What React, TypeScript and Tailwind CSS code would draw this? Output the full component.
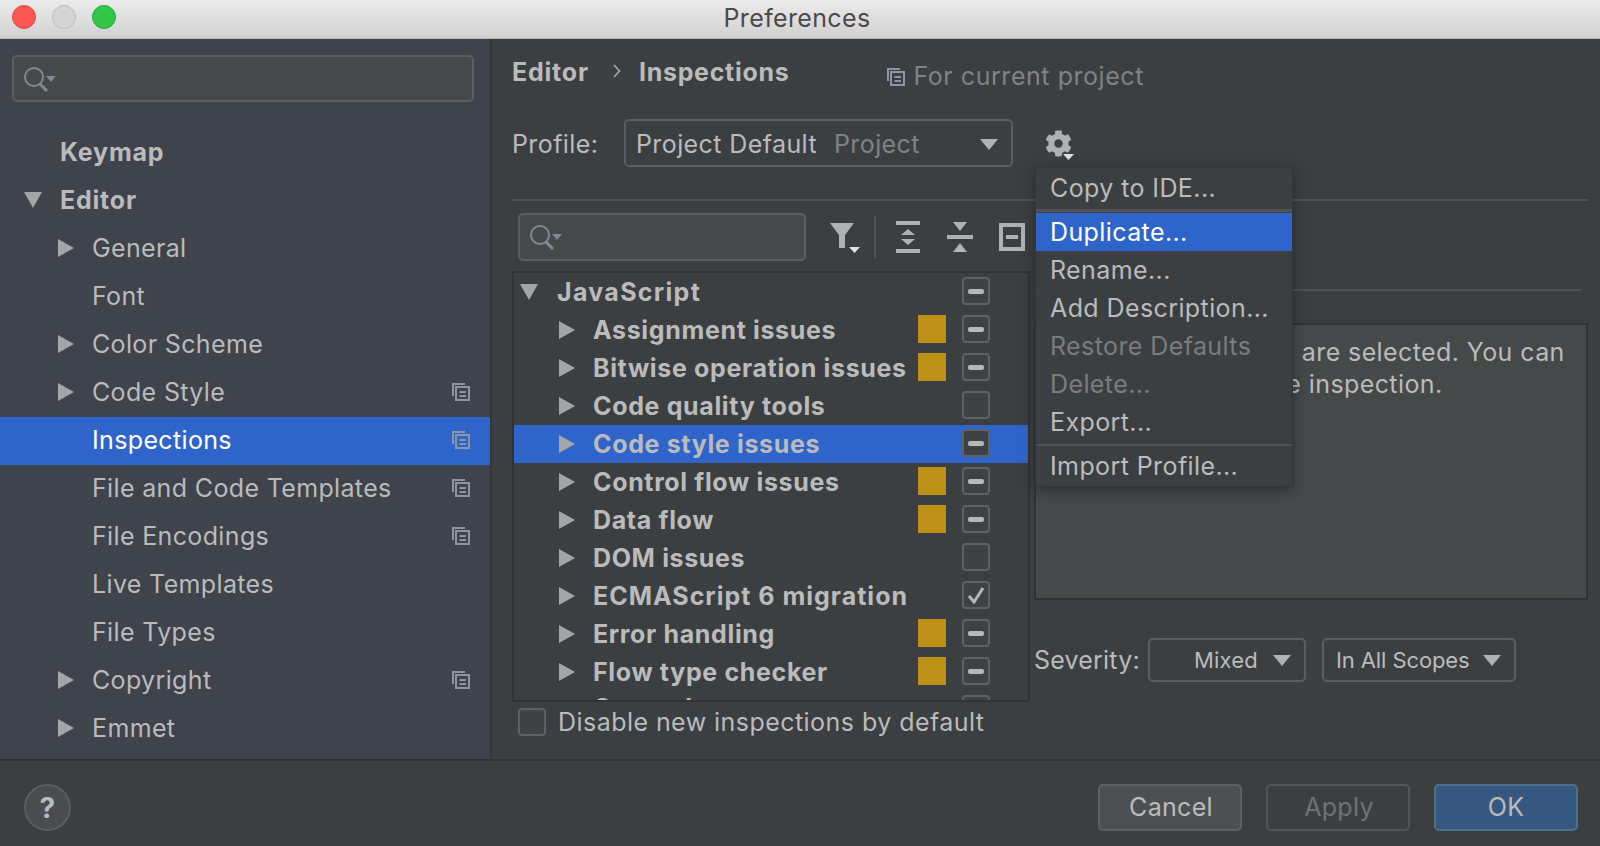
import { FaCog } from 'react-icons/fa';

const SIDEBAR_ITEMS = [
  { label: 'General', arrow: true },
  { label: 'Font' },
  { label: 'Color Scheme', arrow: true },
  { label: 'Code Style', arrow: true, copy: true },
  { label: 'Inspections', copy: true, selected: true },
  { label: 'File and Code Templates', copy: true },
  { label: 'File Encodings', copy: true },
  { label: 'Live Templates' },
  { label: 'File Types' },
  { label: 'Copyright', arrow: true, copy: true },
  { label: 'Emmet', arrow: true },
];

const TREE_ROWS = [
  { label: 'Assignment issues', warn: true, check: 'mixed' },
  { label: 'Bitwise operation issues', warn: true, check: 'mixed' },
  { label: 'Code quality tools', check: 'none' },
  { label: 'Code style issues', check: 'mixed', selected: true },
  { label: 'Control flow issues', warn: true, check: 'mixed' },
  { label: 'Data flow', warn: true, check: 'mixed' },
  { label: 'DOM issues', check: 'none' },
  { label: 'ECMAScript 6 migration', check: 'checked', wide: true },
  { label: 'Error handling', warn: true, check: 'mixed' },
  { label: 'Flow type checker', warn: true, check: 'mixed' },
  { label: 'General', check: 'mixed', cut: true },
];

function ArrowRight() {
  return (
    <svg width="16" height="18" viewBox="0 0 16 18" className="shrink-0">
      <path d="M0 0L16 9L0 18Z" fill="#a3a5a7" />
    </svg>
  );
}

function ArrowDown() {
  return (
    <svg width="18" height="16" viewBox="0 0 18 16" className="shrink-0">
      <path d="M0 0H18L9 16Z" fill="#a3a5a7" />
    </svg>
  );
}

function CaretDown({ w = 18, h = 11, color = '#afb1b3' }: { w?: number; h?: number; color?: string }) {
  return (
    <svg width={w} height={h} viewBox="0 0 18 11" preserveAspectRatio="none" className="shrink-0">
      <path d="M0 0H18L9 11Z" fill={color} />
    </svg>
  );
}

function CopyIcon() {
  return (
    <svg width="18" height="18" viewBox="0 0 18 18" fill="none" stroke="#8a96a3" strokeWidth="2" className="shrink-0">
      <path d="M13 1H1V13" />
      <path d="M4 4H17V17H4Z" />
      <path d="M7.5 9H14M7.5 13H14" />
    </svg>
  );
}

function SearchIcon() {
  return (
    <svg width="34" height="26" viewBox="0 0 34 26" fill="none" className="shrink-0">
      <circle cx="11" cy="11" r="9" stroke="#7d8a94" strokeWidth="2" />
      <path d="M17 18L24 25" stroke="#7d8a94" strokeWidth="3" />
      <path d="M23 10H33L28 16Z" fill="#7d8a94" />
    </svg>
  );
}

function SearchField({ className }: { className: string }) {
  return (
    <div className={`flex items-center pl-[9px] bg-[#45494a] border-2 border-[#5b5e60] rounded-[5px] ${className}`}>
      <SearchIcon />
    </div>
  );
}

function Checkbox({ state }: { state: string }) {
  return (
    <div className="w-[28px] h-[28px] shrink-0 flex items-center justify-center border-2 border-[#5e6164] rounded-[4px] bg-[#3f4244]">
      {state === 'mixed' && <div className="w-[16px] h-[5px] rounded-[2px] bg-[#b5b7b9]" />}
      {state === 'checked' && (
        <svg width="18" height="18" viewBox="0 0 18 18" fill="none">
          <path d="M2 10L7 16L16 2" stroke="#b5b7b9" strokeWidth="3" />
        </svg>
      )}
    </div>
  );
}

function Select({ className, children }: { className: string; children: React.ReactNode }) {
  return (
    <div className={`flex items-center border-2 border-[#5b5e60] rounded-[5px] ${className}`}>{children}</div>
  );
}

function Sidebar() {
  return (
    <div className="w-[490px] shrink-0 bg-[#3e434c] border-r-2 border-[#333537] box-content">
      <div className="pt-[16px] pl-[12px]">
        <SearchField className="w-[462px] h-[47px]" />
      </div>
      <div className="mt-[27px]">
        <div className="h-[48px] pb-[2px] flex items-center pl-[60px] font-bold tracking-[0.8px] text-[#bbbbbb]">Keymap</div>
        <div className="h-[48px] pb-[2px] flex items-center pl-[24px] font-bold tracking-[0.8px] text-[#bbbbbb]">
          <ArrowDown />
          <span className="ml-[18px]">Editor</span>
        </div>
        {SIDEBAR_ITEMS.map((item) => (
          <div
            key={item.label}
            className={`h-[48px] pb-[2px] flex items-center pr-[20px] ${item.selected ? 'bg-[#2f65ca] text-white' : 'text-[#bbbbbb]'}`}
          >
            <div className="w-[92px] shrink-0 pl-[58px]">{item.arrow && <ArrowRight />}</div>
            <span className="flex-1">{item.label}</span>
            {item.copy && <CopyIcon />}
          </div>
        ))}
      </div>
    </div>
  );
}

function ToolbarIcons() {
  return (
    <div className="flex items-center">
      <svg width="32" height="34" viewBox="0 0 32 34" className="ml-[22px] shrink-0">
        <path d="M2 3H26L17 15V28H11V15Z" fill="#afb1b3" />
        <path d="M21 27H32L26.5 33Z" fill="#dfe1e5" />
      </svg>
      <div className="w-[2px] h-[42px] ml-[14px] bg-[#505355]" />
      <svg width="26" height="32" viewBox="0 0 26 32" className="ml-[19px] shrink-0" fill="#afb1b3">
        <path d="M1 0H25V4H1ZM1 28H25V32H1ZM13 8L20 14H6ZM13 24L6 18H20Z" />
      </svg>
      <svg width="26" height="32" viewBox="0 0 26 32" className="ml-[26px] shrink-0" fill="#afb1b3">
        <path d="M0 14H26V18H0ZM6 1H20L13 10ZM13 22L20 31H6Z" />
      </svg>
      <svg width="26" height="28" viewBox="0 0 26 28" className="ml-[26px] shrink-0">
        <path d="M2 2H24V26H2Z" fill="none" stroke="#afb1b3" strokeWidth="4" />
        <path d="M7 12H19V16H7Z" fill="#afb1b3" />
      </svg>
    </div>
  );
}

function Tree() {
  return (
    <div className="mt-[10px] h-[431px] overflow-hidden border-2 border-[#323232] bg-[#3c3f41] font-bold tracking-[0.65px]">
      <div className="h-[38px] flex items-center pl-[6px]">
        <ArrowDown />
        <span className="ml-[19px] text-[#bbbbbb] tracking-[1.3px]">JavaScript</span>
        <div className="ml-auto mr-[38px] -mt-[2px]">
          <Checkbox state="mixed" />
        </div>
      </div>
      {TREE_ROWS.map((row) => (
        <div
          key={row.label}
          className={`h-[38px] flex items-center pl-[45px] ${row.selected ? 'bg-[#2f65ca]' : ''} text-[#bbbbbb]`}
        >
          <ArrowRight />
          <span
            className={`ml-[18px] flex-1 whitespace-nowrap ${row.cut ? '-mt-[4px]' : ''} ${row.wide ? 'tracking-[1px]' : ''}`}
          >
            {row.label}
          </span>
          {row.warn && <div className="w-[28px] h-[28px] -mt-[2px] bg-[#bd9117] shrink-0" />}
          <div className="ml-[16px] mr-[38px] -mt-[2px]">
            <Checkbox state={row.check} />
          </div>
        </div>
      ))}
    </div>
  );
}

function SettingsMenu() {
  return (
    <div className="absolute left-[543px] top-[128px] w-[258px] h-[320px] bg-[#3c3f41] border border-[#333537] shadow-[0_4px_14px_rgba(0,0,0,0.35)] text-[#bbbbbb] tracking-[0.4px]">
      <div className="h-[41px] flex items-center pl-[14px]">Copy to IDE...</div>
      <div className="h-[3px] bg-[#505355]" />
      <div className="h-[38px] mt-[1px] flex items-center pl-[14px] bg-[#2f65ca] text-white">Duplicate...</div>
      <div className="h-[38px] flex items-center pl-[14px]">Rename...</div>
      <div className="h-[38px] flex items-center pl-[14px]">Add Description...</div>
      <div className="h-[38px] flex items-center pl-[14px] text-[#7a7c7e]">Restore Defaults</div>
      <div className="h-[38px] flex items-center pl-[14px] text-[#7a7c7e]">Delete...</div>
      <div className="h-[38px] flex items-center pl-[14px]">Export...</div>
      <div className="h-[2px] mt-[3px] bg-[#505355]" />
      <div className="h-[40px] flex items-center pl-[14px]">Import Profile...</div>
    </div>
  );
}

function MainPanel() {
  return (
    <div className="relative flex-1 bg-[#3c3f41] pl-[20px] pr-[12px]">
      <div className="h-[66px] pt-[21px] flex items-start">
        <span className="font-bold tracking-[0.8px] text-[#bbbbbb]">Editor</span>
        <svg width="10" height="16" viewBox="0 0 10 16" fill="none" className="ml-[23px] mt-[3px] shrink-0">
          <path d="M2 2L7.5 8L2 14" stroke="#a9abad" strokeWidth="1.6" />
        </svg>
        <span className="ml-[17px] font-bold tracking-[0.7px] text-[#bbbbbb]">Inspections</span>
        <div className="ml-[98px] mt-[4px] flex items-center text-[#7f8386] tracking-[0.55px]">
          <CopyIcon />
          <span className="ml-[8px]">For current project</span>
        </div>
      </div>

      <div className="flex items-center h-[48px] mt-[14px] tracking-[0.4px]">
        <span className="w-[112px] pt-[2px] text-[#bbbbbb]">Profile:</span>
        <Select className="w-[389px] h-[48px] pl-[10px] pt-[2px]">
          <span className="text-[#bbbbbb]">Project Default</span>
          <span className="ml-[17px] text-[#7f8386]">Project</span>
          <div className="ml-auto mr-[13px]">
            <CaretDown />
          </div>
        </Select>
        <div className="relative ml-[32px] w-[30px] h-[30px] mt-[3px]">
          <FaCog size={27} color="#afb1b3" />
          <div className="absolute left-[18px] top-[24px]">
            <CaretDown w={11} h={6} color="#dfe1e5" />
          </div>
        </div>
      </div>

      <div className="h-[2px] mt-[32px] bg-[#505355]" />

      <div className="flex">
        <div className="w-[518px] shrink-0">
          <div className="pl-[6px] pt-[12px] flex items-center">
            <SearchField className="w-[288px] h-[48px]" />
            <ToolbarIcons />
          </div>
          <Tree />
          <div className="mt-[6px] ml-[6px] flex items-center text-[#bbbbbb] tracking-[0.45px]">
            <Checkbox state="none" />
            <span className="ml-[12px]">Disable new inspections by default</span>
          </div>
        </div>

        <div className="flex-1 ml-[4px]">
          <div className="h-[2px] mt-[88px] mr-[7px] bg-[#505355]" />
          <div className="mt-[32px] h-[277px] border-2 border-[#323232] bg-[#45494a] pl-[14px] pt-[11px] leading-[32px] text-[#bbbbbb] whitespace-nowrap tracking-[0.4px]">
            <p>Multiple inspections are selected. You can</p>
            <p>edit them as a single inspection.</p>
          </div>
          <div className="mt-[38px] flex items-center text-[#bbbbbb] tracking-[0.2px]">
            <span className="w-[114px]">Severity:</span>
            <Select className="w-[158px] h-[44px] justify-end pr-[13px]">
              <span className="text-[22px]">Mixed</span>
              <div className="ml-[15px]">
                <CaretDown />
              </div>
            </Select>
            <Select className="w-[194px] h-[44px] ml-[16px] pl-[12px]">
              <span className="text-[22px] tracking-[-0.1px]">In All Scopes</span>
              <div className="ml-auto mr-[13px]">
                <CaretDown />
              </div>
            </Select>
          </div>
        </div>
      </div>

      <SettingsMenu />
    </div>
  );
}

function Footer() {
  return (
    <div className="h-[87px] flex items-start bg-[#3c3f41] border-t-2 border-[#323232] pl-[24px] pr-[22px] pt-[23px]">
      <div className="w-[47px] h-[47px] rounded-full bg-[#4a4d4f] border-2 border-[#5b5e60] flex items-center justify-center font-bold text-[28px] text-[#bbbbbb]">
        ?
      </div>
      <div className="ml-auto flex gap-[24px] tracking-[0.3px]">
        <div className="w-[144px] h-[47px] pl-[2px] flex items-center justify-center rounded-[5px] border-2 border-[#5e6163] bg-[#4c5052] text-[#bbbbbb]">
          Cancel
        </div>
        <div className="w-[144px] h-[47px] pl-[2px] flex items-center justify-center rounded-[5px] border-2 border-[#525557] text-[#6f7274]">
          Apply
        </div>
        <div className="w-[144px] h-[47px] flex items-center justify-center rounded-[5px] border-2 border-[#4c708c] bg-[#365880] text-[#bbbbbb]">
          OK
        </div>
      </div>
    </div>
  );
}

export default function App() {
  return (
    <div className="w-[1600px] h-[846px] overflow-hidden flex flex-col font-['Inter','Liberation_Sans',sans-serif] text-[25px] leading-none tracking-[0.35px]">
      {/* Title bar */}
      <div className="h-[39px] shrink-0 relative flex items-center justify-center bg-gradient-to-b from-[#ebebeb] to-[#d1d1d1] border-b border-[#b5b5b5]">
        <div className="absolute left-[12px] top-[5px] flex gap-[16px]">
          <div className="w-[24px] h-[24px] rounded-full bg-[#fc5753] border border-[#df4744]" />
          <div className="w-[24px] h-[24px] rounded-full bg-[#d4d4d4] border border-[#bcbcbc]" />
          <div className="w-[24px] h-[24px] rounded-full bg-[#33c748] border border-[#27aa35]" />
        </div>
        <span className="text-[#4a4a4a] ml-[-6px] mt-[-2px]">Preferences</span>
      </div>

      <div className="flex flex-1 min-h-0">
        <Sidebar />
        <MainPanel />
      </div>

      <Footer />
    </div>
  );
}
